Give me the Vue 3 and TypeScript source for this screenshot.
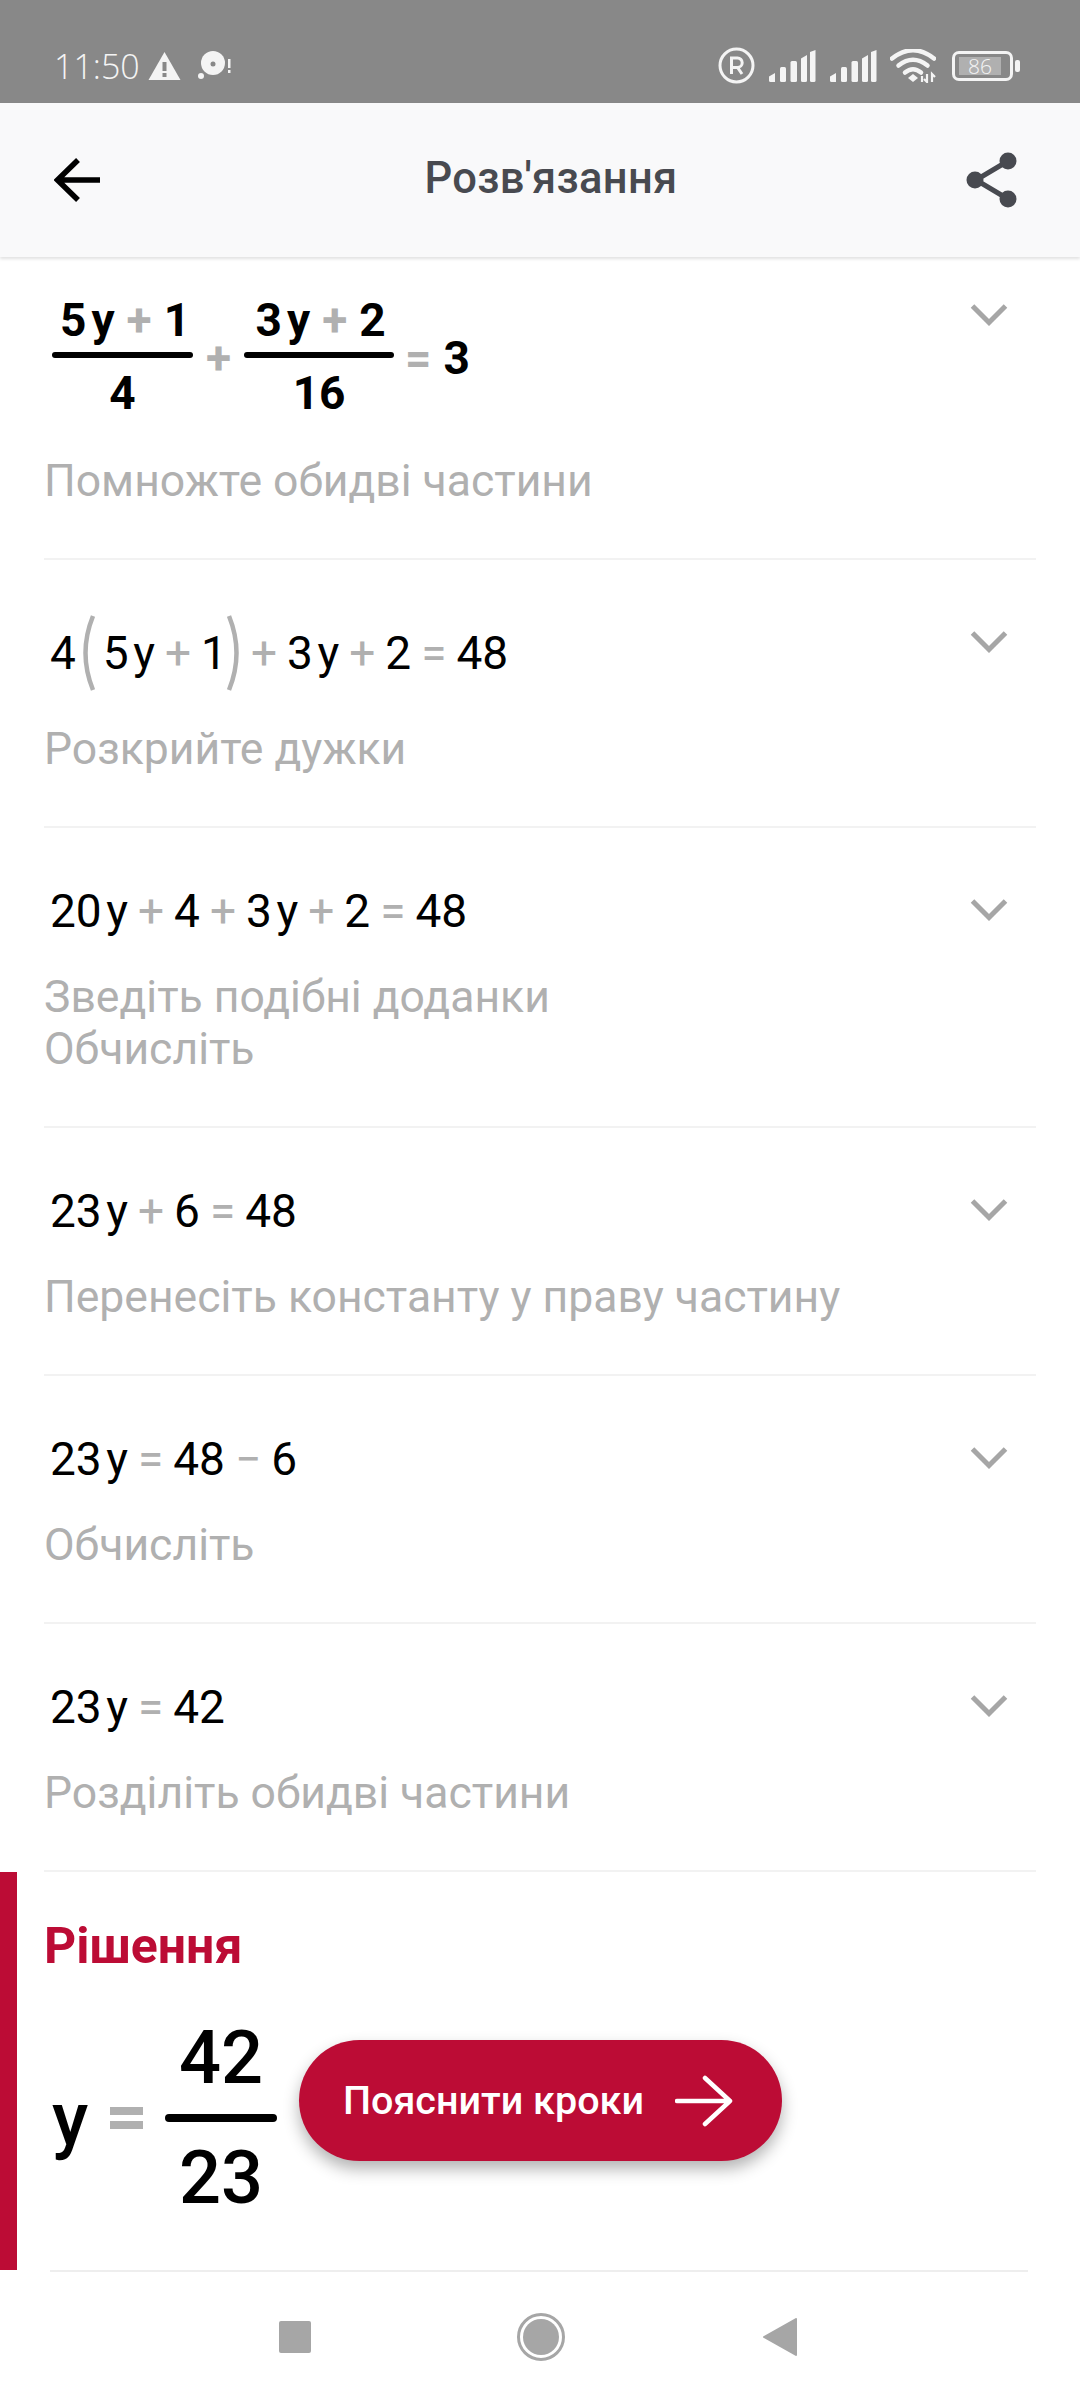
<template>
  <div class="screen">
    <!-- status bar -->
    <div class="status">
      <span class="time">11:50</span>
      <svg class="warn" width="33" height="30" viewBox="0 0 33 30">
        <path d="M16.5 1 32.5 29H.5Z" fill="#f4f4f4" />
        <rect x="14.5" y="11" width="4" height="9" fill="#888" />
        <rect x="14.5" y="22" width="4" height="4" fill="#888" />
      </svg>
      <svg class="disc" width="34" height="30" viewBox="0 0 34 30">
        <circle cx="15" cy="12" r="12" fill="#f4f4f4" />
        <circle cx="15" cy="13" r="2.5" fill="#888" />
        <circle cx="3" cy="25" r="3" fill="#f4f4f4" />
        <rect x="30" y="8" width="2.5" height="9" fill="#f4f4f4" />
        <rect x="30" y="19" width="2.5" height="3" fill="#f4f4f4" />
      </svg>
      <div class="status-right">
        <svg width="37" height="37" viewBox="0 0 37 37">
          <circle cx="18.5" cy="18.5" r="16.5" fill="none" stroke="#f4f4f4" stroke-width="3" />
          <path d="M13.5 27V11h6a4.6 4.6 0 0 1 0 9.4h-6M19.5 20.4l4.5 6.6" fill="none" stroke="#f4f4f4" stroke-width="3" />
        </svg>
        <svg v-for="n in 2" :key="n" width="47" height="32" viewBox="0 0 47 32" class="signal">
          <path d="M0 26.5 6 23v9H1.5Q0 32 0 30.5Z" fill="#f4f4f4" />
          <rect x="11" y="17" width="6" height="15" rx="1.5" fill="#f4f4f4" />
          <rect x="21.5" y="11" width="6.5" height="21" rx="1.5" fill="#f4f4f4" />
          <path d="M32 8.5 38 5v25.5q0 1.500-1.500 1.500h-3Q32 32 32 30.500Z" fill="#f4f4f4" />
          <path d="M41.500 2 47 0v30.500q0 1.500-1.500 1.500h-2.500q-1.500 0-1.500-1.500Z" fill="#f4f4f4" transform="translate(-.5)" />
        </svg>
        <svg width="46" height="34" viewBox="0 0 46 34" class="wifi">
          <path d="M2 9.500Q23-7 44 9.500" fill="none" stroke="#f4f4f4" stroke-width="4.500" stroke-linecap="round" />
          <path d="M8.500 16.500Q23 5 37.500 16.500" fill="none" stroke="#f4f4f4" stroke-width="4.500" stroke-linecap="round" />
          <path d="M15 23.500Q23 17 31 23.500" fill="none" stroke="#f4f4f4" stroke-width="4.500" stroke-linecap="round" />
          <path d="M18 29 23 25l5 4-5 4Z" fill="#f4f4f4" />
          <path d="M32 27v6M37 25v8l-3-3M42 33v-8l3 3" fill="none" stroke="#f4f4f4" stroke-width="2.200" />
        </svg>
        <div class="battery">
          <div class="battery-box"><span class="battery-fill">86</span></div>
          <div class="battery-tip"></div>
        </div>
      </div>
    </div>

    <!-- top bar -->
    <header class="topbar">
      <svg class="back" width="46" height="46" viewBox="0 0 46 46">
        <path d="M46 23H4M24 3 3.500 23 24 43" fill="none" stroke="#000" stroke-width="5.500" />
      </svg>
      <span class="title">Розв'язання</span>
      <svg class="share" width="52" height="56" viewBox="0 0 52 56">
        <path d="M42 9 10 28l32 19" fill="none" stroke="#484a50" stroke-width="5" />
        <circle cx="42" cy="9" r="8.500" fill="#484a50" />
        <circle cx="9" cy="28" r="8.500" fill="#484a50" />
        <circle cx="42" cy="47" r="8.500" fill="#484a50" />
      </svg>
    </header>

    <main class="steps">
      <!-- first step, the fractions are set in bold -->
      <section class="step step-first">
        <div class="math math-bold">
          <div class="frac frac-a">
            <div class="frac-top"><span>5</span><span class="var">y</span><span class="op">+</span><span>1</span></div>
            <div class="frac-bar"></div>
            <div class="frac-bottom">4</div>
          </div>
          <span class="op plus-between">+</span>
          <div class="frac frac-b">
            <div class="frac-top"><span>3</span><span class="var">y</span><span class="op">+</span><span>2</span></div>
            <div class="frac-bar"></div>
            <div class="frac-bottom">16</div>
          </div>
          <span class="op eq-small">=</span>
          <span>3</span>
        </div>
        <p class="desc">Помножте обидві частини</p>
        <svg class="chev" width="38" height="24" viewBox="0 0 38 24"><path d="M2.500 3 19 19.500 35.500 3" fill="none" stroke="#a6a6a6" stroke-width="5" /></svg>
      </section>

      <!-- second step has the brackets -->
      <section class="step">
        <div class="math math-tall">
          <span>4</span>
          <svg class="paren paren-open" width="14" height="78" viewBox="0 0 14 78"><path d="M12 2Q-3 39 12 76" fill="none" stroke="#b0b0b0" stroke-width="4.500" /></svg>
          <span>5</span><span class="var">y</span><span class="op">+</span><span>1</span>
          <svg class="paren paren-close" width="14" height="78" viewBox="0 0 14 78"><path d="M2 2Q17 39 2 76" fill="none" stroke="#b0b0b0" stroke-width="4.500" /></svg>
          <span class="op">+</span>
          <span>3</span><span class="var">y</span><span class="op">+</span><span>2</span><span class="op">=</span><span>48</span>
        </div>
        <p class="desc">Розкрийте дужки</p>
        <svg class="chev" width="38" height="24" viewBox="0 0 38 24"><path d="M2.500 3 19 19.500 35.500 3" fill="none" stroke="#a6a6a6" stroke-width="5" /></svg>
      </section>

      <section v-for="step in steps" :key="step.desc.join()" class="step">
        <div class="math">
          <span v-for="(tok, i) in step.math" :key="i" :class="tokenClass(tok)">{{ tok }}</span>
        </div>
        <p class="desc">
          <template v-for="(line, i) in step.desc" :key="i">{{ line }}<br v-if="i < step.desc.length - 1" /></template>
        </p>
        <svg class="chev" width="38" height="24" viewBox="0 0 38 24"><path d="M2.500 3 19 19.500 35.500 3" fill="none" stroke="#a6a6a6" stroke-width="5" /></svg>
      </section>

      <!-- answer -->
      <section class="solution">
        <h2 class="solution-title">Рішення</h2>
        <div class="solution-row">
          <div class="answer">
            <span class="answer-var">y</span>
            <span class="answer-eq"></span>
            <div class="answer-frac">
              <div>42</div>
              <div class="answer-bar"></div>
              <div>23</div>
            </div>
          </div>
          <button class="explain">
            <span>Пояснити кроки</span>
            <svg width="58" height="52" viewBox="0 0 58 52">
              <path d="M2 26h52M30 3l25 23-25 23" fill="none" stroke="#fff" stroke-width="4.500" stroke-linecap="round" stroke-linejoin="round" />
            </svg>
          </button>
        </div>
      </section>
      <div class="end-line"></div>
    </main>

    <nav class="navbar">
      <div class="nav-square"></div>
      <div class="nav-circle"><div class="nav-dot"></div></div>
      <svg width="36" height="38" viewBox="0 0 36 38"><path d="M2 19 34 1v36Z" fill="#a6a6a6" stroke="#a6a6a6" stroke-width="2" stroke-linejoin="round" /></svg>
    </nav>
  </div>
</template>

<script setup lang="ts">
interface Step {
  math: string[]
  desc: string[]
}

const steps: Step[] = [
  { math: ['20', 'y', '+', '4', '+', '3', 'y', '+', '2', '=', '48'], desc: ['Зведіть подібні доданки', 'Обчисліть'] },
  { math: ['23', 'y', '+', '6', '=', '48'], desc: ['Перенесіть константу у праву частину'] },
  { math: ['23', 'y', '=', '48', '−', '6'], desc: ['Обчисліть'] },
  { math: ['23', 'y', '=', '42'], desc: ['Розділіть обидві частини'] },
]

const tokenClass = (tok: string) => {
  if (tok === 'y') return 'var'
  if (tok === '+' || tok === '=' || tok === '−') return 'op'
  return ''
}
</script>

<style>
html, body {
  margin: 0;
  background: #fff;
}
</style>

<style scoped>
.screen {
  width: 1080px;
  height: 2400px;
  overflow: hidden;
  background: #fff;
  font-family: Roboto, "Noto Sans", sans-serif;
  display: flex;
  flex-direction: column;
}

/* status bar */
.status {
  height: 103px;
  flex: none;
  background: #888;
  display: flex;
  align-items: center;
  padding: 28px 60px 0 54px;
  box-sizing: border-box;
  color: #f4f4f4;
}
.time {
  font-size: 34px;
  font-family: "Open Sans", Roboto, sans-serif;
  font-weight: 300;
}
.warn { margin-left: 8px; }
.disc { margin-left: 17px; }
.status-right {
  margin-left: auto;
  display: flex;
  align-items: center;
}
.signal { margin-left: 14px; }
.wifi { margin-left: 13px; }
.battery {
  display: flex;
  align-items: center;
  margin-left: 16px;
}
.battery-box {
  border: 3px solid #f4f4f4;
  border-radius: 7px;
  padding: 3px 9px 3px 4px;
  display: flex;
}
.battery-fill {
  width: 42px;
  height: 18px;
  background: #b0b0b0;
  color: #f4f4f4;
  font-size: 21px;
  line-height: 18px;
  text-align: center;
  font-family: "Open Sans", sans-serif;
  font-weight: 300;
}
.battery-tip {
  width: 5px;
  height: 12px;
  background: #f4f4f4;
  border-radius: 2px;
  margin-left: 2px;
}

/* top bar */
.topbar {
  height: 154px;
  flex: none;
  background: #f9f9fa;
  box-shadow: 0 2px 3px rgba(0, 0, 0, 0.12);
  display: grid;
  grid-template-columns: 1fr auto 1fr;
  align-items: center;
  padding: 0 62px 0 54px;
  position: relative;
  z-index: 1;
}
.title {
  font-size: 43.5px;
  font-weight: 500;
  color: #484a50;
  letter-spacing: 0.3px;
  margin: 0 0 4px 30px;
}
.share { justify-self: end; }

/* steps */
.steps {
  flex: 1;
  display: flex;
  flex-direction: column;
}
.step {
  position: relative;
  margin: 0 44px;
  padding: 53px 0 51px;
  border-bottom: 2px solid #f2f2f2;
}
.step-first {
  padding-top: 39px;
  padding-bottom: 51px;
}
.chev {
  position: absolute;
  top: 70px;
  right: 28px;
}
.step-first .chev { top: 46px; }
.math {
  height: 60px;
  display: flex;
  align-items: center;
  padding-left: 6px;
  font-size: 46px;
  color: #000;
  line-height: 60px;
}
.math-tall { height: 80px; }
.var { margin-left: 4.5px; }
.op {
  color: #b0b0b0;
  margin: 0 10px;
}
.paren-open { margin: 0 8px 0 5px; }
.paren-close { margin: 0; }
.math-bold {
  font-weight: 700;
  height: 129px;
}
.math-bold > span { padding-bottom: 6px; }
.math-bold .var { margin-left: 5px; }
.math-bold .op { margin: 0 12px; }
.frac { text-align: center; }
.frac-top {
  display: flex;
  justify-content: center;
  line-height: 54px;
  height: 59px;
  padding-left: 3px;
}
.frac-a .frac-top { padding-left: 5px; }
.frac-bar {
  height: 6px;
  border-radius: 3px;
  background: #000;
}
.frac-bottom {
  line-height: 71px;
  height: 71px;
}
.frac-a { width: 141px; margin-left: 2px; }
.frac-b { width: 150px; }
.math-bold .plus-between { margin: 0 13px; }
.math-bold .eq-small { margin: 0 12px 0 11px; }
.desc {
  margin: 30px 0 0;
  font-size: 44.5px;
  line-height: 52px;
  color: #b0b0b0;
}

/* solution */
.solution {
  border-left: 17px solid #bc0c35;
  height: 398px;
  padding-left: 27px;
  box-sizing: border-box;
  flex: none;
}
.solution-title {
  margin: 46px 0 0;
  font-size: 50px;
  line-height: 56px;
  font-weight: 700;
  color: #bc0c35;
}
.solution-row {
  display: flex;
  align-items: flex-start;
  margin-top: 34px;
}
.answer {
  display: flex;
  align-items: center;
  padding-left: 8px;
  font-size: 74px;
  font-weight: 500;
  color: #000;
}
.answer-var { width: 38px; }
.answer-eq {
  width: 33px;
  height: 22px;
  margin: 0 22px 0 20px;
  border-top: 8px solid #b0b0b0;
  border-bottom: 8px solid #b0b0b0;
  box-sizing: border-box;
}
.answer-frac {
  width: 112px;
  text-align: center;
  line-height: 100px;
}
.answer-bar {
  height: 8px;
  border-radius: 4px;
  background: #000;
  margin: 6px 0;
}
.explain {
  width: 483px;
  height: 121px;
  margin: 32px 0 0 22px;
  border: none;
  border-radius: 61px;
  background: #bc0c35;
  color: #fff;
  font-family: inherit;
  font-size: 39.5px;
  font-weight: 500;
  display: flex;
  align-items: center;
  justify-content: space-between;
  padding: 0 49px 0 44px;
  box-sizing: border-box;
  box-shadow: 0 8px 16px rgba(0, 0, 0, 0.3);
}
.end-line {
  height: 2px;
  background: #eee;
  margin: 0 52px 0 50px;
  flex: none;
}

/* nav bar */
.navbar {
  height: 130px;
  flex: none;
  background: #fff;
  display: flex;
  align-items: center;
  justify-content: space-between;
  box-sizing: border-box;
  padding: 0 282px 0 279px;
}
.nav-square {
  width: 32px;
  height: 32px;
  border-radius: 2px;
  background: #a6a6a6;
}
.nav-circle {
  width: 48px;
  height: 48px;
  margin-left: 8px;
  box-sizing: border-box;
  border: 3px solid #a6a6a6;
  border-radius: 50%;
  padding: 3px;
}
.nav-dot {
  width: 100%;
  height: 100%;
  border-radius: 50%;
  background: #a6a6a6;
}
</style>
